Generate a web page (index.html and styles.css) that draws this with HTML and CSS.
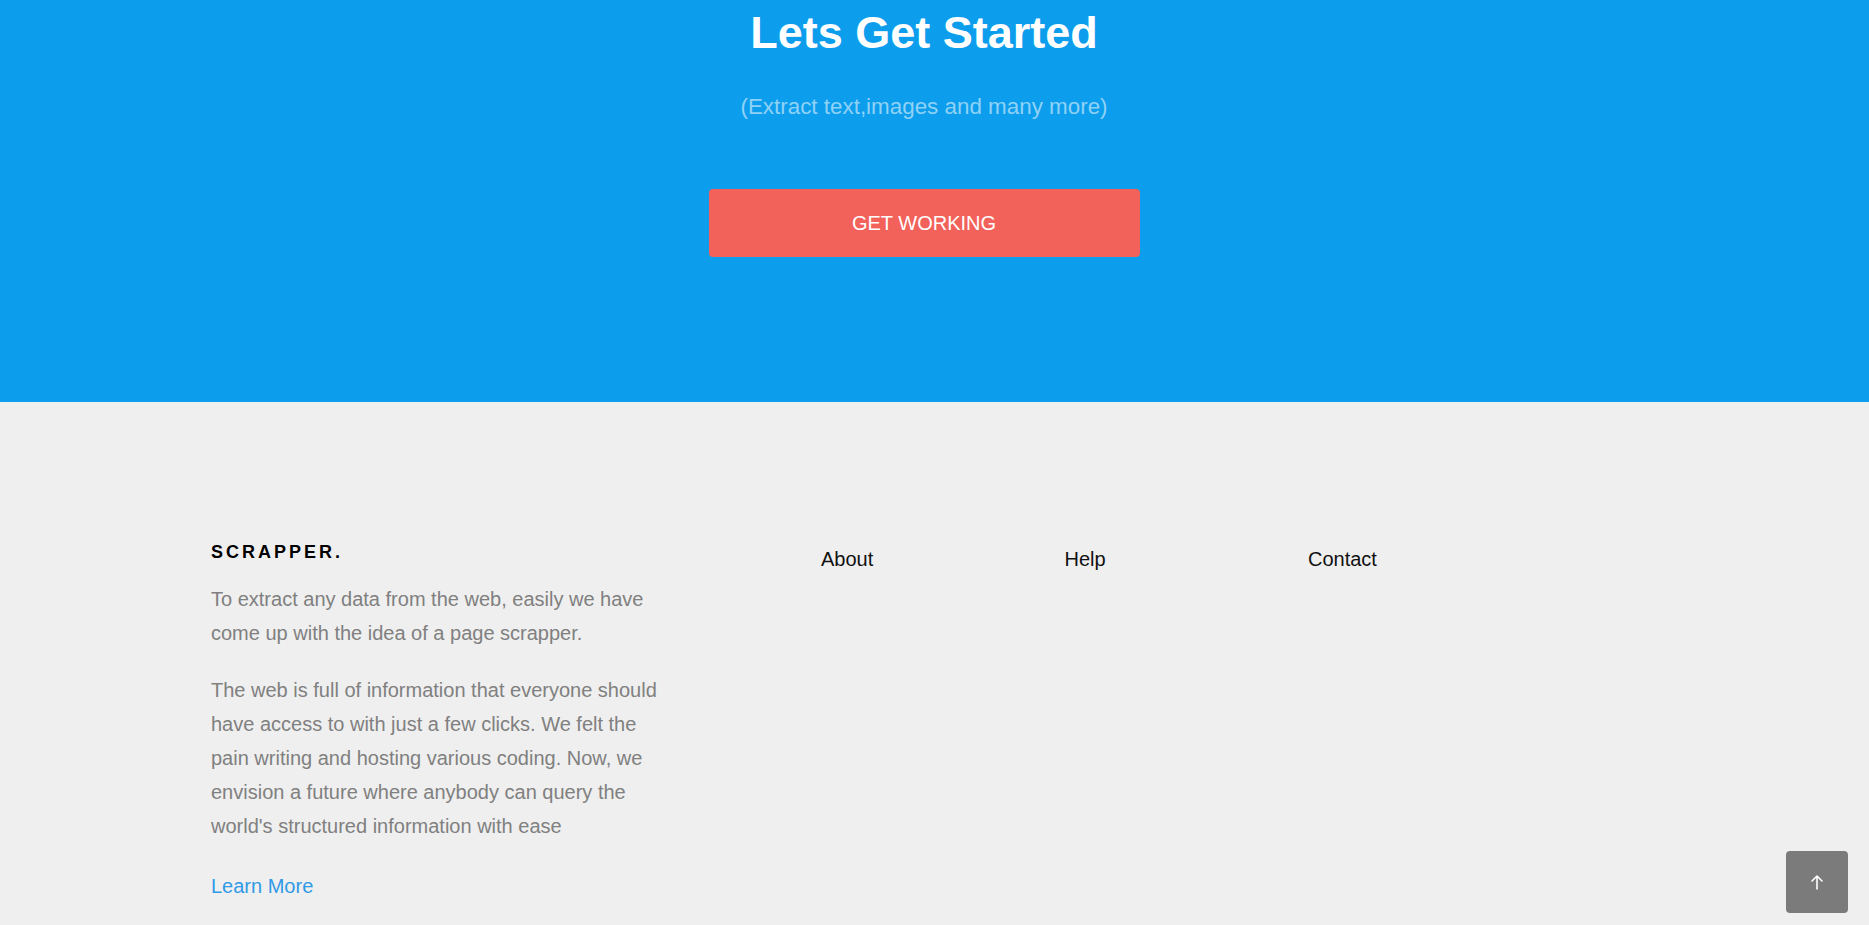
FILE: index.html
```html
<!DOCTYPE html>
<html lang="en">
<head>
<meta charset="utf-8">
<title>Scrapper</title>
<link rel="stylesheet" href="styles.css">
</head>
<body>
<section class="hero">
  <h1 class="hero-title">Lets Get Started</h1>
  <p class="hero-sub">(Extract text,images and many more)</p>
  <a class="hero-btn" href="#">GET WORKING</a>
</section>
<footer class="footer">
  <div class="footer-row">
    <div class="footer-about">
      <h3 class="brand">SCRAPPER.</h3>
      <p class="text first">To extract any data from the web, easily we have come up with the idea of a page scrapper.</p>
      <p class="text second">The web is full of information that everyone should have access to with just a few clicks. We felt the pain writing and hosting various coding. Now, we envision a future where anybody can query the world's structured information with ease</p>
      <p class="text more"><a href="#" class="learn">Learn More</a></p>
    </div>
    <div class="footer-col"><a href="#" class="nav-link">About</a></div>
    <div class="footer-col"><a href="#" class="nav-link">Help</a></div>
    <div class="footer-col"><a href="#" class="nav-link">Contact</a></div>
  </div>
</footer>
<a href="#" class="to-top" aria-label="Back to top">
  <svg width="14" height="16" viewBox="0 0 14 16" fill="none" stroke="#fff" stroke-width="1.6" stroke-linecap="round" stroke-linejoin="round"><path d="M7 15V2M2 7l5-5 5 5"/></svg>
</a>
</body>
</html>
```
FILE: styles.css
```css
* { box-sizing: border-box; }
html, body { margin: 0; padding: 0; }
body {
  font-family: "Liberation Sans", Arial, sans-serif;
  background: #efefef;
  overflow: hidden;
  height: 925px;
}
.hero {
  background: #0c9ded;
  height: 402px;
  padding: 8px 21px 0 0;
  text-align: center;
}
.hero-title {
  margin: 0;
  font-size: 45px;
  line-height: 50px;
  font-weight: 700;
  color: #ffffff;
}
.hero-sub {
  margin: 36px 0 0;
  font-size: 22.4px;
  line-height: 26px;
  color: #8fd2f6;
}
.hero-btn {
  display: block;
  width: 431px;
  height: 68px;
  margin: 69px auto 0;
  background: #f2615a;
  border-radius: 4px;
  color: #ffffff;
  font-size: 20px;
  line-height: 68px;
  text-decoration: none;
}
.footer {
  padding: 139px 0 0 211px;
}
.footer-row {
  display: flex;
  align-items: flex-start;
}
.footer-about {
  width: 458px;
  margin-right: 152px;
}
.brand {
  margin: 0;
  font-size: 18px;
  line-height: 22px;
  font-weight: 700;
  letter-spacing: 3px;
  color: #000000;
}
.text {
  margin: 0;
  font-size: 20px;
  line-height: 34px;
  color: #808080;
}
.text.first { margin-top: 19px; }
.text.second { margin-top: 23px; }
.text.more { margin-top: 26px; }
.learn {
  color: #2f9ae6;
  text-decoration: none;
}
.footer-col {
  width: 243.5px;
  padding-top: 6px;
}
.nav-link {
  font-size: 20px;
  line-height: 24px;
  color: #111111;
  text-decoration: none;
}
.to-top {
  position: fixed;
  right: 21px;
  bottom: 12px;
  width: 62px;
  height: 62px;
  border-radius: 4px;
  background: #7b7b7b;
  display: flex;
  align-items: center;
  justify-content: center;
}
```
